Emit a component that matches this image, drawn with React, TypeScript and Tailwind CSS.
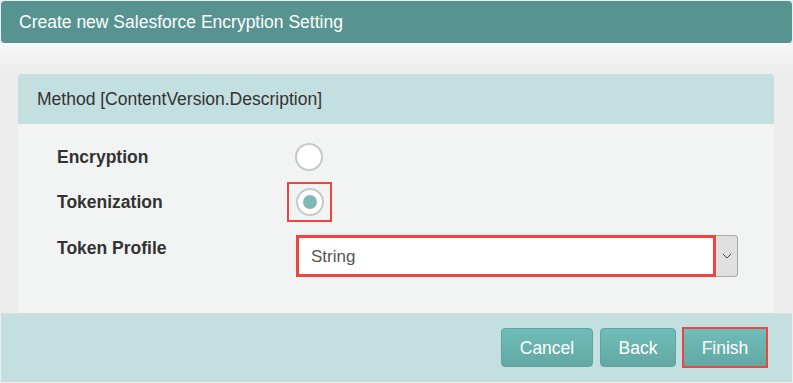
import React from "react";

const Radio = ({ checked }: { checked?: boolean }) => (
  <span className="flex h-[28px] w-[28px] items-center justify-center rounded-full border-2 border-[#c8c8c8] bg-white">
    {checked && <span className="h-[14px] w-[14px] rounded-full bg-[#7fb8b5]" />}
  </span>
);

export default function App() {
  return (
    <div
      className="flex h-[383px] w-[793px] flex-col bg-[#eeeeee]"
      style={{ fontFamily: '"Liberation Sans", Arial, sans-serif' }}
    >
      <div className="mx-[1px] mt-[1px] flex h-[42px] items-center rounded-[4px] bg-[#579491] px-[18px] text-[17.5px] text-white">
        Create new Salesforce Encryption Setting
      </div>

      <div className="flex-1 bg-gradient-to-b from-[#f6f6f7] to-[#ededed] to-[30px] pl-[18px] pr-[19px] pt-[31px]">
        <div className="flex h-[50px] items-center rounded-t-[4px] bg-[#c4dfdf] px-[19px] text-[17.5px] text-[#333]">
          Method [ContentVersion.Description]
        </div>
        <div className="h-[189px] bg-[#f2f4f3] pl-[39px] pt-[19px]">
          <div className="flex h-[28px] items-center">
            <span className="w-[238px] text-[17.5px] font-bold text-[#333]">Encryption</span>
            <Radio />
          </div>
          <div className="mt-[17px] flex h-[28px] items-center">
            <span className="w-[230px] text-[17.5px] font-bold text-[#333]">Tokenization</span>
            <span className="flex h-[40px] w-[45px] items-center justify-center border-2 border-[#f04343]">
              <Radio checked />
            </span>
          </div>
          <div className="mt-[19px] flex items-start">
            <span className="w-[239px] text-[17.5px] font-bold text-[#333]">Token Profile</span>
            <div className="flex h-[42px]">
              <div className="flex w-[420px] items-center border-[3px] border-[#f04343] bg-white px-[12px] pt-[2px] text-[17px] text-[#555]">
                String
              </div>
              <div className="flex w-[22px] items-center justify-center rounded-r-[4px] border border-l-0 border-[#aaa] bg-[#e0e0e0]">
                <svg width="10" height="6" viewBox="0 0 10 6" fill="none">
                  <path d="M1 1l4 4 4-4" stroke="#444" strokeWidth="1" />
                </svg>
              </div>
            </div>
          </div>
        </div>
      </div>

      <div className="mx-[1px] mb-[1px] flex h-[70px] items-center justify-end gap-[7px] border-t border-[#dcdcdc] bg-[#c4dfdf] pr-[24px]">
        <button className="h-[39px] w-[92px] rounded-[4px] border border-[#5ea39f] bg-gradient-to-b from-[#6fbdb9] to-[#63a8a4] text-[17.5px] text-white">
          Cancel
        </button>
        <button className="h-[39px] w-[76px] rounded-[4px] border border-[#5ea39f] bg-gradient-to-b from-[#6fbdb9] to-[#63a8a4] text-[17.5px] text-white">
          Back
        </button>
        <button className="ml-[-1px] h-[41px] w-[86px] border-2 border-[#f04343] bg-gradient-to-b from-[#6fbdb9] to-[#63a8a4] text-[17.5px] text-white">
          Finish
        </button>
      </div>
    </div>
  );
}
